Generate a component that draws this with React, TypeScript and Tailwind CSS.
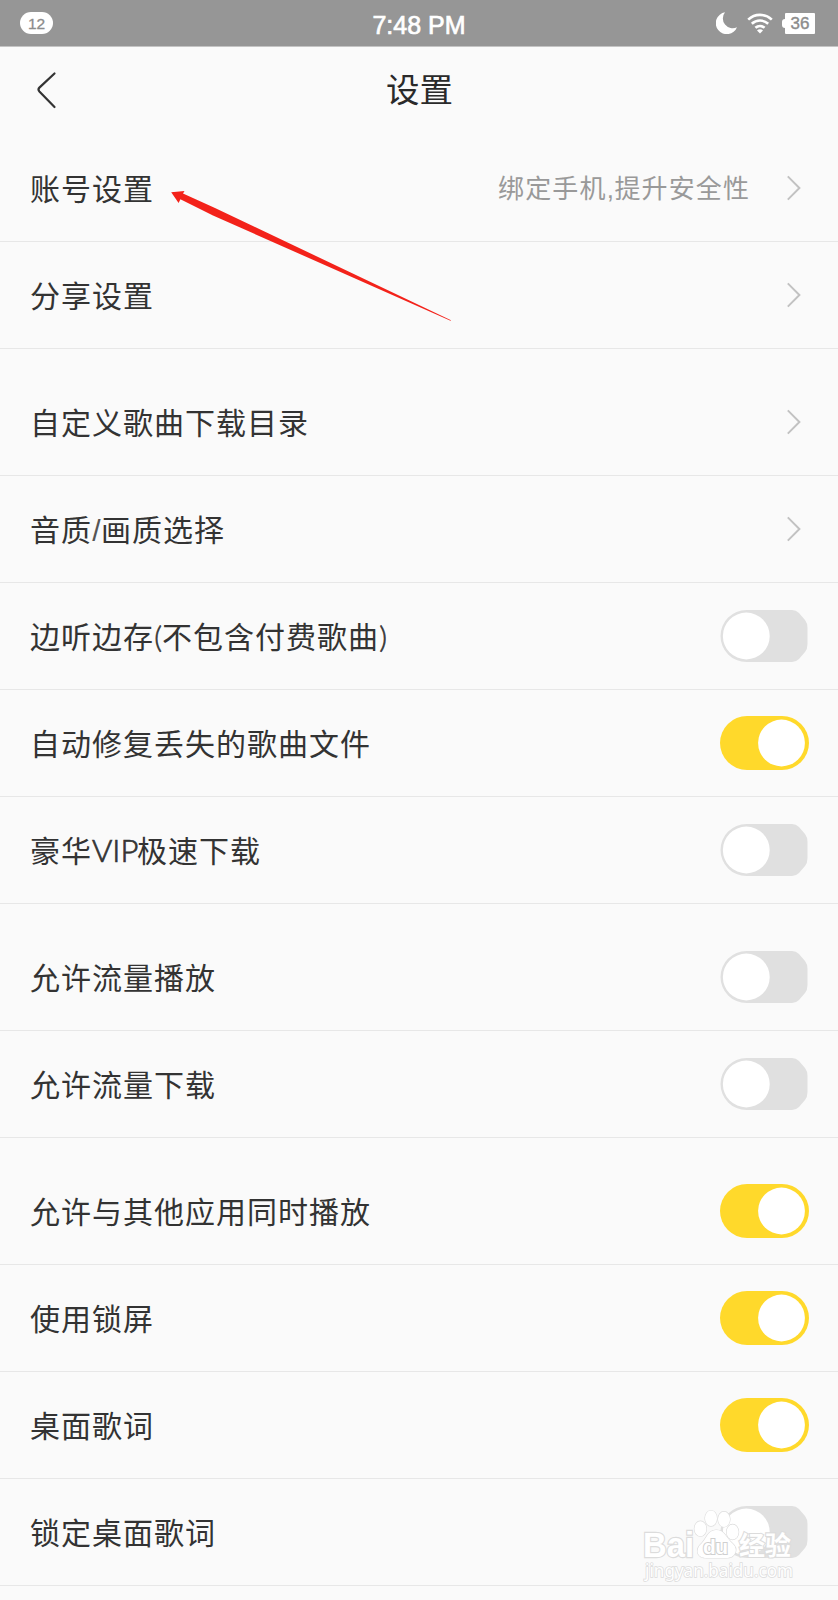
import { ReactNode } from 'react'

type Item = {
    label: ReactNode
    hint?: ReactNode
    on?: boolean
}

// Narrow light glyphs for the latin characters inside chinese labels
const Latin = ({
    children,
    className,
}: {
    children: ReactNode
    className?: string
}) => (
    <span
        className={`inline-block text-center leading-[0] tracking-normal ${className || ''}`}
    >
        {children}
    </span>
)

const groups: Item[][] = [
    [
        {
            label: '账号设置',
            hint: (
                <>
                    绑定手机
                    <Latin className="w-[8px] font-['Liberation_Sans']">,</Latin>
                    提升安全性
                </>
            ),
        },
        { label: '分享设置' },
    ],
    [
        { label: '自定义歌曲下载目录' },
        {
            label: (
                <>
                    音质
                    <Latin className="w-[9px] font-['Liberation_Sans'] text-[#555]">
                        /
                    </Latin>
                    画质选择
                </>
            ),
        },
        {
            label: (
                <>
                    边听边存
                    <Latin className="w-[8px] font-[Lato] font-light [-webkit-text-stroke:0.6px]">
                        (
                    </Latin>
                    不包含付费歌曲
                    <Latin className="w-[8px] font-[Lato] font-light [-webkit-text-stroke:0.6px]">
                        )
                    </Latin>
                </>
            ),
            on: false,
        },
        { label: '自动修复丢失的歌曲文件', on: true },
        {
            label: (
                <>
                    豪华
                    <Latin className="w-[45px] font-[Lato] text-[31px] font-light [-webkit-text-stroke:0.7px]">
                        VIP
                    </Latin>
                    极速下载
                </>
            ),
            on: false,
        },
    ],
    [
        { label: '允许流量播放', on: false },
        { label: '允许流量下载', on: false },
    ],
    [
        { label: '允许与其他应用同时播放', on: true },
        { label: '使用锁屏', on: true },
        { label: '桌面歌词', on: true },
        { label: '锁定桌面歌词', on: false },
    ],
]

const Toggle = ({ on }: { on: boolean }) => (
    <svg
        role="switch"
        aria-checked={on}
        width="90"
        height="54"
        viewBox="0 0 90 54"
        className="mr-[28px]"
    >
        {on ? (
            <>
                <rect width="89" height="54" rx="27" fill="#ffd92b" />
                <circle cx="61.5" cy="27" r="23.4" fill="#fff" />
            </>
        ) : (
            <>
                <path
                    d="M26.5 1H72Q76 1 79 4L85 11Q87.5 14 87.5 19V35Q87.5 40 85 43L79 50Q76 53 72 53H26.5A26 26 0 0 1 26.5 1Z"
                    fill="#e0e0e0"
                />
                <circle cx="26.3" cy="27" r="23.4" fill="#fff" />
            </>
        )}
    </svg>
)

const Chevron = () => (
    <svg
        width="16"
        height="28"
        viewBox="0 0 16 28"
        fill="none"
        stroke="#c2c2c2"
        strokeWidth="2"
        className="mr-[36px]"
    >
        <path d="M1.8 2.4 13.4 14 1.8 25.6" />
    </svg>
)

const Row = ({ label, hint, on }: Item) => (
    <div className="flex h-[107px] items-center border-b border-[#e7e7e7] pl-[30px]">
        <span className="flex-1 pb-[3px] text-[30px] leading-none tracking-[1px] text-[#333]">
            {label}
        </span>
        {hint && (
            <span className="mr-[36px] pb-[3px] text-[26px] leading-none tracking-[1.1px] text-[#999]">
                {hint}
            </span>
        )}
        {on === undefined ? <Chevron /> : <Toggle on={on} />}
    </div>
)

const StatusBar = () => (
    <div className="flex h-[47px] items-center justify-between border-b border-[#c4c4c4] bg-[#969696] font-['Liberation_Sans']">
        <div className="flex flex-1 pl-5">
            <span className="flex h-[22px] w-[33px] items-center justify-center rounded-full bg-white pt-px text-[15.5px] text-[#8c8c8c] [-webkit-text-stroke:0.3px]">
                12
            </span>
        </div>
        <span className="pl-[3px] pt-[4px] text-[25px] leading-none text-white [-webkit-text-stroke:0.7px_#fff]">
            7:48 PM
        </span>
        <div className="flex flex-1 items-center justify-end pr-[23px]">
            <svg width="22" height="22" viewBox="0 0 22 22" fill="#fff">
                <path d="M9 .3A11 11 0 1 0 21 15.2 9.8 9.8 0 0 1 9 .3Z" />
            </svg>
            <svg
                width="26"
                height="22"
                viewBox="0 0 26 22"
                fill="none"
                stroke="#fff"
                strokeWidth="2.6"
                className="ml-[9px]"
            >
                <path d="M1.2 7.6a17 17 0 0 1 23.6 0" />
                <path d="M4.8 11.8a12 12 0 0 1 16.4 0" />
                <path d="M8.4 15.8a7 7 0 0 1 9.2 0" />
                <path d="M13 21.4 10 18.4a4.2 4.2 0 0 1 6 0Z" fill="#fff" stroke="none" />
            </svg>
            <span className="ml-[9px] h-[9px] w-[3px] rounded-l-sm bg-white" />
            <span className="flex h-[21px] w-[30px] items-center justify-center rounded-[1px] bg-white pt-px text-[17px] leading-none text-[#8c8c8c] [-webkit-text-stroke:0.4px]">
                36
            </span>
        </div>
    </div>
)

const Header = () => (
    <div className="flex h-[88px] items-center pb-[2px]">
        <svg
            width="24"
            height="40"
            viewBox="0 0 24 40"
            fill="none"
            stroke="#333"
            strokeWidth="2.2"
            strokeLinecap="round"
            className="ml-[35px]"
        >
            <path d="M19.5 3.5 4.4 17.6Q2.6 19.6 4.4 21.6L19.5 37" />
        </svg>
        <h1 className="flex-1 pb-[4px] pr-[58px] text-center text-[33.5px] leading-none text-[#2a2a2a]">
            设置
        </h1>
    </div>
)

const Arrow = () => (
    <svg
        width="290"
        height="140"
        viewBox="0 0 290 140"
        fill="#f3221a"
        className="absolute left-[165px] top-[185px]"
    >
        <path d="M6.2 7.2 19.5 6 18 8.6 50 23 286 135.2 285.5 135.8 48 30.5 15.4 14.2 13.6 18Z" />
    </svg>
)

const Watermark = () => (
    <svg
        width="170"
        height="80"
        viewBox="0 0 170 80"
        fill="#fff"
        stroke="#dcdcdc"
        strokeWidth="1.2"
        className="absolute left-[635px] top-[1505px]"
    >
        <g
            fontFamily="Liberation Sans, Noto Sans CJK SC, sans-serif"
            fontWeight="700"
            paintOrder="stroke"
        >
            <text
                x="8"
                y="52"
                fontSize="35"
                textLength="51"
                lengthAdjust="spacingAndGlyphs"
                strokeWidth="2.4"
            >
                Bai
            </text>
            <ellipse cx="65.4" cy="23.7" rx="6" ry="7.5" />
            <ellipse cx="76" cy="13.3" rx="6" ry="7.8" />
            <ellipse cx="89" cy="14.3" rx="6" ry="7.6" />
            <ellipse cx="97.6" cy="27" rx="6" ry="7.6" />
            <path d="M81 25C73 25 71 34 67 38C60 44 61 53 72 53H91C101 53 104 44 97 38C91 33 90 25 81 25Z" />
            <text x="68" y="49" fontSize="21" textLength="25" stroke="#d0d0d0" strokeWidth="2">
                du
            </text>
            <text
                x="104"
                y="50"
                fontSize="26"
                textLength="52"
                lengthAdjust="spacingAndGlyphs"
                strokeWidth="2.2"
            >
                经验
            </text>
        </g>
        <text
            x="10"
            y="72"
            fontSize="18"
            fontFamily="Noto Sans, sans-serif"
            textLength="148"
            lengthAdjust="spacingAndGlyphs"
            strokeWidth="1.6"
            paintOrder="stroke"
        >
            jingyan.baidu.com
        </text>
    </svg>
)

const App = () => {
    return (
        <div className="relative h-[1600px] w-[838px] overflow-hidden bg-[#fafafa] font-['Noto_Sans_CJK_SC',sans-serif]">
            <StatusBar />
            <Header />
            <div className="flex flex-col gap-5">
                {groups.map((items, i) => (
                    <div key={i}>
                        {items.map((item, j) => (
                            <Row key={j} {...item} />
                        ))}
                    </div>
                ))}
            </div>
            <Arrow />
            <Watermark />
        </div>
    )
}

export default App
